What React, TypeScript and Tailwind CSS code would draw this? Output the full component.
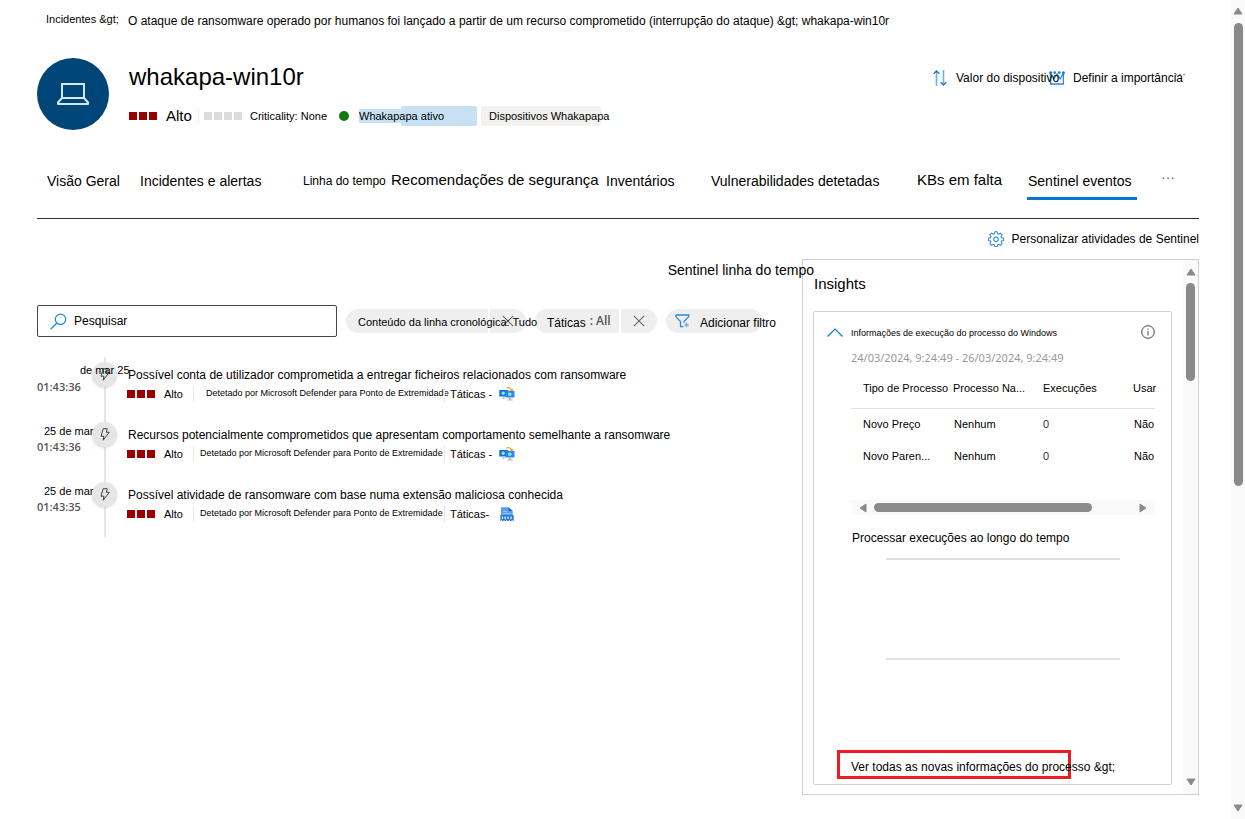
import { useState } from "react";

const TABS = [
  { label: "Visão Geral", className: "w-[93px] text-sm" },
  { label: "Incidentes e alertas", className: "w-[163px] text-sm" },
  { label: "Linha do tempo", className: "w-[88px] text-xs" },
  { label: "Recomendações de segurança", className: "w-[215px] text-[15px]" },
  { label: "Inventários", className: "w-[105px] text-sm" },
  { label: "Vulnerabilidades detetadas", className: "w-[206px] text-sm" },
  { label: "KBs em falta", className: "w-[110px] text-[15px]" },
  { label: "Sentinel eventos", className: "w-[110px] text-sm" },
];

const EVENTS = [
  {
    date: "de mar 25",
    late: true,
    time: "01:43:36",
    title:
      "Possível conta de utilizador comprometida a entregar ficheiros relacionados com ransomware",
    tactic: "Táticas -",
    icon: "lateral",
  },
  {
    date: "25 de mar",
    late: false,
    time: "01:43:36",
    title:
      "Recursos potencialmente comprometidos que apresentam comportamento semelhante a ransomware",
    tactic: "Táticas -",
    icon: "lateral",
  },
  {
    date: "25 de mar",
    late: false,
    time: "01:43:35",
    title: "Possível atividade de ransomware com base numa extensão maliciosa conhecida",
    tactic: "Táticas-",
    icon: "impact",
  },
];

const PROCESSES = [
  { type: "Novo Preço", name: "Nenhum", runs: "0", used: "Não" },
  { type: "Novo Paren...", name: "Nenhum", runs: "0", used: "Não" },
];

function Blocks({ count, className }: { count: number; className: string }) {
  return (
    <span className="flex shrink-0 gap-0.5">
      {Array.from({ length: count }, (_, i) => (
        <span key={i} className={`size-2 ${className}`} />
      ))}
    </span>
  );
}

function Triangle({ points }: { points: string }) {
  return (
    <svg viewBox="0 0 10 10" className="size-2.5 shrink-0" aria-hidden="true">
      <polygon points={points} fill="#8a8a8a" stroke="#8a8a8a" strokeLinejoin="round" />
    </svg>
  );
}

const UP = "5,2 9,8 1,8";
const DOWN = "5,8 9,2 1,2";
const LEFT = "2,5 8,1 8,9";
const RIGHT = "8,5 2,1 2,9";

function LaptopIcon() {
  return (
    <svg viewBox="0 0 32 22" className="h-[22px] w-8" fill="none" stroke="#d6e8f7" strokeWidth="2">
      <path d="M5 1h22v14H5z" />
      <path d="M5 15l-4 4.500V21h30v-1.500L27 15" strokeLinejoin="round" />
    </svg>
  );
}

function SortIcon() {
  return (
    <svg viewBox="0 0 14 16" className="h-4 w-3.5 shrink-0" fill="none">
      <path d="M3.500 16V1M10.500 0v15" stroke="#6cb0e6" strokeWidth="1.600" />
      <path d="M.7 3.800L3.500 1l2.800 2.800M7.700 12.200l2.800 2.800 2.800-2.800" stroke="#1a78cc" strokeWidth="1.400" />
    </svg>
  );
}

function CrownIcon() {
  return (
    <svg viewBox="0 0 16 14" className="h-3.5 w-4 shrink-0" fill="none" stroke="#2b88d8" strokeWidth="1.300">
      <path d="M1.600 2v11h12.800V2l-3.200 6L8 3 4.800 8z" />
      <g fill="#1a78cc" stroke="none">
        <circle cx="1.600" cy="1.800" r="1.500" />
        <circle cx="5.700" cy="1.600" r="1.300" />
        <circle cx="10.300" cy="1.600" r="1.300" />
        <circle cx="14.400" cy="1.800" r="1.500" />
      </g>
    </svg>
  );
}

function GearIcon() {
  return (
    <svg viewBox="0 0 20 20" className="size-4 shrink-0" fill="none" stroke="#2b88d8" strokeWidth="1.300" strokeLinejoin="round">
      <path d="M8.500 1h3l.5 2.500 1.400.6 2.200-1.400 2.100 2.100-1.400 2.200.6 1.400 2.500.5v3l-2.500.5-.6 1.400 1.400 2.200-2.100 2.100-2.200-1.400-1.400.6-.5 2.500h-3l-.5-2.500-1.400-.6-2.200 1.400-2.100-2.100 1.400-2.200-.6-1.400L.6 11.900v-3l2.500-.5.6-1.400-1.400-2.200 2.100-2.100 2.200 1.400L8 3.500z" />
      <circle cx="10" cy="10.200" r="2.800" />
    </svg>
  );
}

function SearchIcon() {
  return (
    <svg viewBox="0 0 17 17" className="size-[17px] shrink-0" fill="none" stroke="#2b88d8" strokeWidth="1.300">
      <circle cx="10.500" cy="6.300" r="5.200" />
      <path d="M6.800 10L.6 16.200" />
    </svg>
  );
}

function CloseIcon() {
  return (
    <svg viewBox="0 0 12 12" className="size-3" fill="none" stroke="#666" strokeWidth="1.100">
      <path d="M.8.8l10.400 10.400M11.200.8L.8 11.200" />
    </svg>
  );
}

function FilterIcon() {
  return (
    <svg viewBox="0 0 15 14" className="h-3.5 w-[15px] shrink-0" fill="none">
      <path
        d="M.8 1h13v1.600L9 7.500v1.300M.8 1v1.600l4.700 4.900v5.200h2.800"
        stroke="#2b88d8"
        strokeWidth="1.300"
      />
      <path d="M11.500 8.700v4.600M9.200 11h4.600M9.900 9.400l3.200 3.200M13.100 9.400l-3.200 3.200" stroke="#6cb0e6" />
    </svg>
  );
}

function BoltIcon() {
  return (
    <svg viewBox="0 0 10 13" className="h-[13px] w-2.5" fill="none" stroke="#444" strokeLinejoin="round">
      <path d="M3.200.7h4L6.400 4.300h2.900L3.200 12.200l.7-4H1z" />
    </svg>
  );
}

function LateralIcon() {
  return (
    <svg viewBox="0 0 16 14" className="h-3.5 w-4 shrink-0">
      <path d="M7.500 1c2.500-.8 4.300.1 5 2.300" fill="none" stroke="#f0a030" strokeWidth="1.300" />
      <path d="M10.300 2.800l4.200-.8-1.300 3z" fill="#f0a030" />
      <path d="M.3 3h9v6.500h-9z" fill="#1372cf" />
      <path d="M6.500 4h9v6.500h-9z" fill="#2b8ae6" />
      <circle cx="4.200" cy="6.300" r="1.700" fill="#8fe3f7" />
      <circle cx="10.800" cy="7.300" r="1.800" fill="#8fe3f7" />
      <path d="M9.800 10.500h2.400v2h1.600v1H8.200v-1h1.600zM4 9.500h1.500V12H3.200v-.8H4z" fill="#b5bcc4" />
    </svg>
  );
}

function ImpactIcon() {
  return (
    <svg viewBox="0 0 14 14" className="mx-px size-3.5 shrink-0">
      <path d="M1 .3h7.500L12.700 4v5H1z" fill="#5a9eea" />
      <path d="M8.500.3L12.700 4H8.500z" fill="#1b66c0" />
      <path d="M3 4.500h4M3 6.500h7.500" stroke="#a9d0fa" strokeWidth=".8" />
      <path d="M.3 8h13.400v6H.3z" fill="#2b7cd9" />
      <path d="M2.500 9.500V12M5.200 9.500v2.800M8 9.500V12M11 9.500v2.800" stroke="#fff" strokeWidth="1.100" />
      <path d="M1.500 14v-1M4 14v-1M6.600 14v-1M9.500 14v-1M12.300 14v-1" stroke="#fff" strokeWidth=".8" />
    </svg>
  );
}

function Header() {
  return (
    <header className="mt-7 flex gap-5">
      <div className="flex size-[72px] shrink-0 items-center justify-center rounded-full bg-[#004578]">
        <LaptopIcon />
      </div>
      <div className="min-w-0 flex-1 pt-[3px]">
        <h1 className="text-2xl leading-8">whakapa-win10r</h1>
        <div className="mt-3 flex h-[22px] items-center whitespace-nowrap text-[11px]">
          <Blocks count={3} className="bg-[#990000]" />
          <span className="w-8 pl-[9px] text-[15px]">Alto</span>
          <span className="mr-[5px] ml-[9px] h-4 w-px bg-[#eeeeee]" />
          <Blocks count={4} className="bg-[#dcdcdc]" />
          <span className="w-[97px] pl-2">Criticality: None</span>
          <span className="size-2.5 rounded-full bg-[#107c10]" />
          <span className="ml-2.5 flex h-5 w-[118px] items-center rounded-xs bg-[linear-gradient(#c7e0f4,#c7e0f4)] bg-[length:100%_14px] bg-center bg-no-repeat">
            <span className="z-10 w-[42px]">Whakapapa ativo</span>
            <span className="h-5 flex-1 rounded-xs bg-[#c7e0f4]" />
          </span>
          <span className="ml-1 flex h-5 w-[120px] items-center rounded-xs bg-[#f3f2f1] pl-2">
            Dispositivos Whakapapa
          </span>
        </div>
      </div>
      <div className="mt-2.5 flex h-5 items-center pr-3 text-xs whitespace-nowrap">
        <button type="button" className="z-10 flex w-[116px] items-center gap-[9px]">
          <SortIcon />
          <span className="w-20">Valor do dispositivo</span>
        </button>
        <button type="button" className="flex w-[124px] items-center gap-2">
          <CrownIcon />
          <span className="w-20">Definir a importância</span>
        </button>
        <button type="button" aria-label="Mais ações" className="h-7 w-3.5 self-end text-[#444]">
          ···
        </button>
      </div>
    </header>
  );
}

function Tabs() {
  const [active, setActive] = useState("Sentinel eventos");
  return (
    <nav className="mt-[35px] flex border-b border-[#323130] pb-[18px] pl-[10px]">
      {TABS.map((tab) => (
        <button
          key={tab.label}
          type="button"
          onClick={() => setActive(tab.label)}
          className={`flex h-[35px] items-center border-b-3 pb-px whitespace-nowrap ${tab.className} ${
            active === tab.label ? "border-[#0078d4] pl-px" : "border-transparent"
          }`}
        >
          {tab.label}
        </button>
      ))}
      <button type="button" aria-label="Mais separadores" className="ml-6 h-6 text-sm text-[#666]">
        ···
      </button>
    </nav>
  );
}

function Filters() {
  return (
    <div className="mt-6 flex h-8 items-center whitespace-nowrap">
      <label className="flex h-8 w-[300px] items-center gap-[7px] rounded-xs border border-[#484644] pl-3">
        <SearchIcon />
        <input
          type="search"
          aria-label="Pesquisar"
          placeholder="Pesquisar"
          className="min-w-0 flex-1 text-xs outline-none placeholder:text-black"
        />
      </label>
      <div className="ml-[9px] flex h-6 w-[180px] gap-0.5">
        <button type="button" className="z-10 flex w-[142px] items-center text-[11px]">
          <span className="flex h-6 w-full items-center rounded-l-full bg-[#efefef] pt-0.5 pl-3">
            Conteúdo da linha cronológica: Tudo
          </span>
        </button>
        <button type="button" aria-label="Remover conteúdo" className="flex w-9 items-center justify-center rounded-r-full bg-[#efefef]">
          <CloseIcon />
        </button>
      </div>
      <div className="ml-[9px] flex h-6 gap-0.5">
        <button type="button" className="flex w-[84px] items-center gap-1 rounded-l-full bg-[#efefef] pl-3 text-xs">
          <span className="pt-1">Táticas</span>
          <span className="font-['Open_Sans'] font-semibold text-[#555]">: All</span>
        </button>
        <button type="button" aria-label="Remover táticas" className="flex w-9 items-center justify-center rounded-r-full bg-[#efefef]">
          <CloseIcon />
        </button>
      </div>
      <button type="button" className="ml-[9px] flex h-6 w-24 items-center gap-[10px] rounded-full bg-[#efefef] pl-[9px] text-xs">
        <FilterIcon />
        <span className="pt-1">Adicionar filtro</span>
      </button>
    </div>
  );
}

function Timeline() {
  return (
    <ol className="mt-5">
      {EVENTS.map((event) => (
        <li key={event.title} className="flex h-[60px] whitespace-nowrap">
          <div className={`relative z-10 w-[55px] ${event.late ? "pt-[5px]" : "pt-[7px]"}`}>
            <p className={`text-[11px] ${event.late ? "ml-[43px] leading-[17px]" : "ml-[7px] leading-[15px]"}`}>
              {event.date}
            </p>
            <p className="font-['Open_Sans'] text-[11px] leading-4 font-semibold text-[#555]">{event.time}</p>
          </div>
          <div className="flex w-[25px] justify-center bg-[linear-gradient(#e5e5e5,#e5e5e5)] bg-[length:2px_100%] bg-center bg-no-repeat pt-[5px]">
            <span className="flex size-[25px] items-center justify-center rounded-full bg-[#e6e6e6] shadow-sm">
              <BoltIcon />
            </span>
          </div>
          <div className="ml-[10px] pt-[9px]">
            <p className="pl-px text-xs leading-[18px]">{event.title}</p>
            <div className="flex h-5 items-center text-[11px]">
              <Blocks count={3} className="bg-[#990000]" />
              <span className="w-[38px] pl-[9px]">Alto</span>
              <span className="h-4 w-px bg-[#e8e8e8]" />
              <span className={`w-[250px] text-[9px] ${event.late ? "pl-3" : "pl-1.5"}`}>
                Detetado por Microsoft Defender para Ponto de Extremidade
              </span>
              <span className="h-4 w-px bg-[#e8e8e8]" />
              <span className="w-[54px] pl-[5px]">{event.tactic}</span>
              {event.icon === "lateral" ? <LateralIcon /> : <ImpactIcon />}
            </div>
          </div>
        </li>
      ))}
    </ol>
  );
}

function ProcessCard() {
  return (
    <article className="mt-4 flex-1 rounded-xs border border-[#d2d0ce] px-4">
      <div className="-ml-[3px] flex h-10 items-center">
        <svg viewBox="0 0 16 9" className="h-[9px] w-4" fill="none" stroke="#0078d4" strokeWidth="1.200">
          <path d="M.5 8.500L8 1l7.500 7.500" />
        </svg>
        <h3 className="ml-2 flex-1 pt-1 text-[9px]">Informações de execução do processo do Windows</h3>
        <svg viewBox="0 0 14 14" className="size-3.5" fill="none" stroke="#444" strokeWidth="1">
          <circle cx="7" cy="7" r="6.300" />
          <path d="M7 6v4.500M7 3.500v1.200" />
        </svg>
      </div>
      <div className="ml-[21px]">
        <p className="font-['Noto_Sans'] text-[11px] leading-3 text-[#999]">
          24/03/2024, 9:24:49 - 26/03/2024, 9:24:49
        </p>
        <table className="w-full table-fixed text-left text-[11px] whitespace-nowrap">
          <thead>
            <tr className="h-11 border-b border-[#e1e1e1]">
              <th className="w-[102px] pt-1 pl-3 font-normal">Tipo de Processo</th>
              <th className="w-[90px] pt-1 font-normal">Processo Na...</th>
              <th className="w-[90px] pt-1 font-normal">Execuções</th>
              <th className="pt-1 font-normal">Usar</th>
            </tr>
          </thead>
          <tbody>
            {PROCESSES.map((row) => (
              <tr key={row.type} className="h-8">
                <td className="pl-3">{row.type}</td>
                <td className="pl-px">{row.name}</td>
                <td className="text-[#323130]">{row.runs}</td>
                <td className="pl-px">{row.used}</td>
              </tr>
            ))}
          </tbody>
        </table>
        <div className="mt-7 flex h-[15px] items-center bg-[#fafafa] px-[7px]">
          <Triangle points={LEFT} />
          <div className="mr-auto ml-1.5 h-[9px] w-[218px] rounded-full bg-[#8a8a8a]" />
          <Triangle points={RIGHT} />
        </div>
        <h4 className="mt-[13px] pl-px text-xs leading-5">Processar execuções ao longo do tempo</h4>
        <div className="mt-[10px] mr-[35px] ml-[35px] h-[102px] border-y-2 border-[#e1e1e1]" />
      </div>
      <a
        href="#processos"
        className="mt-[90px] ml-[7px] flex h-[29px] w-[234px] items-center border-3 border-[#ed1c24] pt-1 pl-[11px] text-xs whitespace-nowrap"
      >
        {"Ver todas as novas informações do processo &gt;"}
      </a>
    </article>
  );
}

function InsightsPanel() {
  return (
    <aside className="flex h-[536px] w-[397px] shrink-0 border border-[#d2d0ce]">
      <div className="flex min-w-0 flex-1 flex-col pt-[13px] pr-[11px] pb-[9px] pl-[10px]">
        <h2 className="pl-px text-[15px] leading-[22px]">Insights</h2>
        <ProcessCard />
      </div>
      <div className="flex w-[15px] flex-col items-center bg-[#fafafa] pt-[7px] pb-[7px]">
        <Triangle points={UP} />
        <div className="mt-1.5 mb-auto h-[98px] w-[9px] rounded-full bg-[#8a8a8a]" />
        <Triangle points={DOWN} />
      </div>
    </aside>
  );
}

export default function App() {
  return (
    <div className="flex min-h-screen bg-white font-['Liberation_Sans',Arial,sans-serif] text-black">
      <main className="min-w-0 flex-1 pt-[10px] pr-8 pb-6 pl-[37px]">
        <div className="flex h-5 pl-[9px] whitespace-nowrap">
          <a href="#incidentes" className="w-[82px] text-[11px] leading-[18px]">
            {"Incidentes &gt;"}
          </a>
          <span className="text-xs leading-[22px]">
            {"O ataque de ransomware operado por humanos foi lançado a partir de um recurso comprometido (interrupção do ataque) &gt; whakapa-win10r"}
          </span>
        </div>
        <Header />
        <Tabs />
        <div className="flex h-10 items-center justify-end">
          <button type="button" className="flex items-center gap-2 text-xs">
            <GearIcon />
            Personalizar atividades de Sentinel
          </button>
        </div>
        <div className="flex items-start">
          <section className="min-w-0 flex-1">
            <h2 className="relative z-10 -mr-3 text-right text-sm leading-[22px]">Sentinel linha do tempo</h2>
            <Filters />
            <Timeline />
          </section>
          <InsightsPanel />
        </div>
      </main>
      <div className="flex w-[14px] shrink-0 flex-col items-center bg-[#fafafa] py-[6px]">
        <Triangle points={UP} />
        <div className="mt-[7px] mb-auto h-[463px] w-[9px] rounded-full bg-[#8a8a8a]" />
        <Triangle points={DOWN} />
      </div>
    </div>
  );
}
